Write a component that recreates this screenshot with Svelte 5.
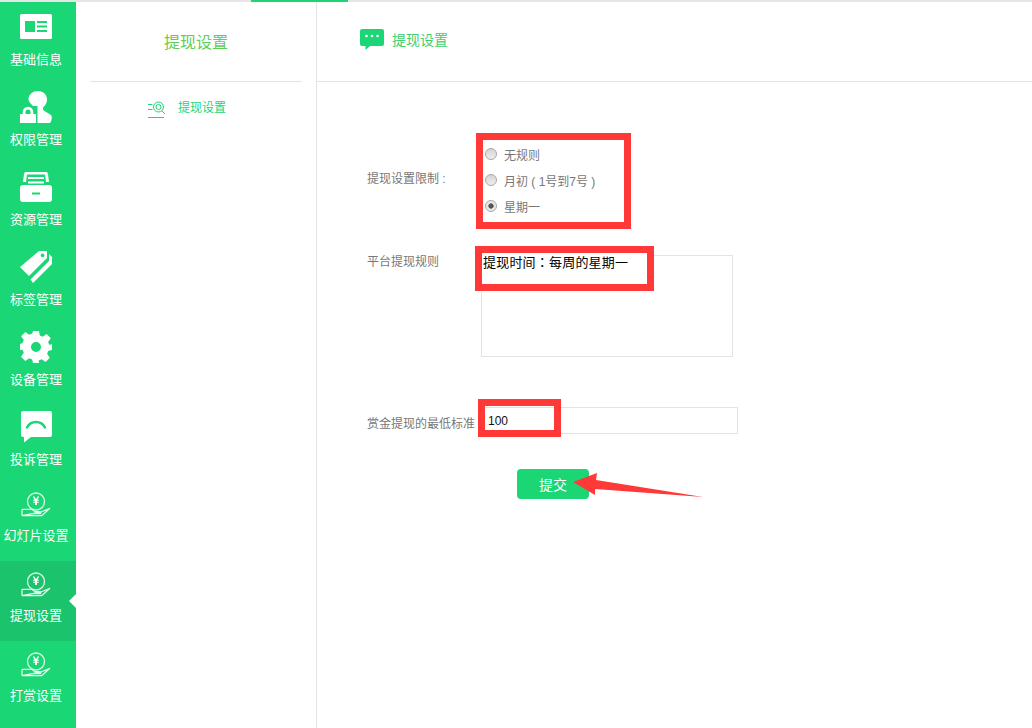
<script>
  const menu = [
    { label: '基础信息', icon: 'card' },
    { label: '权限管理', icon: 'user' },
    { label: '资源管理', icon: 'box' },
    { label: '标签管理', icon: 'tag' },
    { label: '设备管理', icon: 'gear' },
    { label: '投诉管理', icon: 'chat' },
    { label: '幻灯片设置', icon: 'coin', tight: true },
    { label: '提现设置', icon: 'coin', tight: true, active: true },
    { label: '打赏设置', icon: 'coin', tight: true },
  ]

  const options = ['无规则', '月初 ( 1号到7号 )', '星期一']
  let rule = $state('星期一')
  let ruleText = $state('')
  let minAmount = $state('100')
</script>

{#snippet icon(name)}
  <svg class="nav-icon" viewBox="0 0 32 32" aria-hidden="true">
    {#if name === 'card'}
      <path fill="#fff" d="M1.500 3h29a1.500 1.500 0 0 1 1.500 1.500v22a1.500 1.500 0 0 1-1.500 1.500h-29A1.500 1.500 0 0 1 0 26.500v-22A1.500 1.500 0 0 1 1.500 3z" />
      <path fill="#1bd674" d="M5 10h10v11H5zM17 10h10v2H17zM17 14.500h10v2H17zM17 19h10v2H17z" />
    {:else if name === 'user'}
      <path fill="#fff" d="M18 0c5.500 0 9 4 9 8.500 0 3-1.500 5.500-3.500 7.500-1 1.500-.5 3 1 4l6.500 4c1 1 1 3 .5 4.500-.3 2-1 3.500-2 3.500H17V22c0-2-1-4-2.500-5.500C11 13 8.500 11 8.500 8 8.500 3.500 13 0 18 0z" />
      <path fill="#1bd674" d="M-1 15h18.500v18H-1z" />
      <path fill="#fff" fill-rule="evenodd" d="M0 23h2.700v-2a5.300 5.300 0 0 1 10.600 0v2H16v9H0zM5.500 23h5v-2a2.500 2.500 0 0 0-5 0z" />
    {:else if name === 'box'}
      <g transform="translate(0 1)">
        <path fill="#fff" fill-rule="evenodd" d="M3 10 4 2q.2-2 2-2h20q1.800 0 2 2l1 8h-3l-1-7.500H7L6 10z" />
        <path fill="#fff" d="M8 5h16v2H8zM8 9.500h16v2H8z" />
        <path fill="#fff" fill-rule="evenodd" d="M3 13h26q3 0 3 3v11q0 3-3 3H3q-3 0-3-3V16q0-3 3-3zM12 20.500v2h8v-2z" />
      </g>
    {:else if name === 'tag'}
      <g transform="translate(0 -1)">
        <path fill="#fff" fill-rule="evenodd" d="M19 1 27 1 27 8 9 26 0 17zM22.500 3.500a1.800 1.800 0 1 0 .1 0z" />
        <path fill="#fff" d="M29 4 32 7 32 14 13 33 10.500 29.500 29 11z" />
      </g>
    {:else if name === 'gear'}
      <path fill="#fff" fill-rule="evenodd" d="M13 0h6l.8 4.500 3 1.300L26.600 3l4.200 4.200-2.700 3.900 1.300 3L32 13v6l-3.600.8-1.300 3 2.700 3.900-4.200 4.200-3.900-2.700-3 1.300L19 32h-6l-.8-3.500-3-1.300-3.900 2.700L1.100 25.700l2.700-3.900-1.300-3L0 19v-6l2.500-.9 1.300-3-2.700-3.900L5.300 1 9.200 3.700l3-1.300zM16 11a5 5 0 1 0 0 10 5 5 0 0 0 0-10z" />
    {:else if name === 'chat'}
      <g transform="translate(0 -1)">
        <path fill="#fff" d="M3 1h27q2 0 2 2v22q0 2-2 2H11l-7 5.500V27H3q-2 0-2-2V3q0-2 2-2z" />
        <path fill="none" stroke="#1bd674" stroke-width="2.500" stroke-linecap="round" d="M7 17.500c2-4 5.500-5.500 9-5.500s7 1.500 9 5.500" />
      </g>
    {:else}
      <g fill="none" stroke="#e4f5ea" stroke-width="1.300">
        <circle cx="16" cy="9.500" r="8.500" />
        <path d="M2 17.300h9.700l3.300 2.400h6l-.5 1.800H13M21 20l9-3.700-8.300 7.400H2zM2 17.300v6.400" />
      </g>
      <path fill="#fff" d="M12.800 4.500h1.600l1.600 2.800 1.600-2.800h1.600l-1.800 3.200h1.400v1h-1.900v1h1.900v1h-1.900V13h-1.800v-2.300h-1.900v-1h1.900v-1h-1.900v-1h1.400z" />
    {/if}
  </svg>
{/snippet}

<div class="page">
  <div class="top-line"><span class="top-tab"></span></div>

  <div class="shell">
    <nav class="nav">
      {#each menu as item}
        <a class="nav-item" class:tight={item.tight} class:active={item.active} href="#top">
          {@render icon(item.icon)}
          <span>{item.label}</span>
        </a>
      {/each}
    </nav>

    <aside class="side">
      <h2 class="side-title">提现设置</h2>
      <a class="side-link" href="#top">
        <svg class="side-icon" viewBox="0 0 17 17" aria-hidden="true">
          <g fill="none" stroke="#1bd674" stroke-width="1">
            <path d="M0 3.500h4.500M0 8.500h4.500M0 16.500h16" />
            <circle cx="10.500" cy="6" r="5" />
            <circle cx="10.500" cy="6" r="2.500" />
            <path d="M14 10l3 3" />
          </g>
        </svg>
        <span>提现设置</span>
      </a>
    </aside>

    <main class="main">
      <header class="main-head">
        <svg class="head-icon" viewBox="0 0 24 21" aria-hidden="true">
          <path fill="#1bd674" d="M2 0h20q2 0 2 2v13q0 2-2 2H10l-4.500 4v-4H2q-2 0-2-2V2q0-2 2-2z" />
          <g fill="#fff"><circle cx="6.500" cy="7" r="1.300" /><circle cx="12" cy="7" r="1.300" /><circle cx="17.500" cy="7" r="1.300" /></g>
        </svg>
        <span>提现设置</span>
      </header>

      <form class="form" onsubmit={(e) => e.preventDefault()}>
        <div class="row row-radio">
          <span class="label">提现设置限制 :</span>
          <div class="radios">
            {#each options as opt}
              <label class="radio">
                <input type="radio" name="rule" value={opt} bind:group={rule} />
                <span>{opt}</span>
              </label>
            {/each}
            <span class="mark mark-radios"></span>
          </div>
        </div>

        <div class="row row-text">
          <span class="label">平台提现规则</span>
          <div class="text-wrap">
            <textarea class="area" bind:value={ruleText} aria-label="平台提现规则"></textarea>
            <div class="mark mark-text">提现时间：每周的星期一</div>
          </div>
        </div>

        <div class="row row-min">
          <span class="label">赏金提现的最低标准</span>
          <div class="min-wrap">
            <input class="amount" type="text" bind:value={minAmount} aria-label="赏金提现的最低标准" />
            <span class="mark mark-min"></span>
          </div>
        </div>

        <div class="submit-row">
          <button class="submit" type="submit">提交</button>
          <svg class="arrow" viewBox="0 0 130 25" aria-hidden="true">
            <path fill="#ff3838" d="M0 9 24 0l-1 7 107 17L22 16l0 6z" />
          </svg>
        </div>
      </form>
    </main>
  </div>
</div>

<style>
  :global(body) {
    margin: 0;
    background: #fff;
    font-family: "Liberation Sans", "Noto Sans CJK SC", sans-serif;
  }
  .page {
    width: 1032px;
    height: 728px;
    overflow: hidden;
    display: flex;
    flex-direction: column;
  }
  .top-line {
    height: 2px;
    flex: none;
    background: #e6e6e6;
    position: relative;
  }
  .top-tab {
    position: absolute;
    left: 251px;
    top: 0;
    width: 97px;
    height: 2px;
    background: #1bd674;
  }
  .shell {
    flex: 1;
    display: flex;
    min-height: 0;
  }
  .nav {
    width: 76px;
    flex: none;
    background: #1bd674;
    display: flex;
    flex-direction: column;
    margin-top: -1px;
  }
  .nav-item {
    height: 80px;
    flex: none;
    box-sizing: border-box;
    padding: 10px 4px 0 0;
    display: flex;
    flex-direction: column;
    align-items: center;
    color: #fff;
    font-size: 13px;
    line-height: 18px;
    text-decoration: none;
    position: relative;
    white-space: nowrap;
  }
  .nav-item.tight {
    padding-top: 11px;
  }
  .nav-icon {
    width: 32px;
    height: 32px;
    margin-bottom: 8px;
    flex: none;
    overflow: visible;
  }
  .nav-item.tight .nav-icon {
    margin-bottom: 3px;
  }
  .nav-item.active {
    background: #1ac36c;
  }
  .nav-item.active::after {
    content: '';
    position: absolute;
    right: 0;
    top: 33px;
    border: 7px solid transparent;
    border-right-color: #fff;
    border-left-width: 0;
  }
  .side {
    width: 241px;
    flex: none;
    box-sizing: border-box;
    border-right: 1px solid #e3e3e3;
    padding: 0 14px;
  }
  .side-title {
    margin: 0;
    height: 80px;
    box-sizing: border-box;
    border-bottom: 1px solid #e3e3e3;
    text-align: center;
    font-size: 16px;
    font-weight: 400;
    line-height: 81px;
    color: #5fce55;
  }
  .side-link {
    display: flex;
    align-items: center;
    gap: 13px;
    padding: 19px 0 0 58px;
    font-size: 12px;
    line-height: 17px;
    color: #1bd674;
    text-decoration: none;
  }
  .side-link span {
    margin-top: -2px;
  }
  .side-icon {
    width: 17px;
    height: 17px;
    flex: none;
  }
  .main {
    flex: 1;
    min-width: 0;
  }
  .main-head {
    height: 80px;
    box-sizing: border-box;
    border-bottom: 1px solid #e3e3e3;
    padding: 0 0 5px 43px;
    display: flex;
    align-items: center;
    gap: 8px;
    font-size: 14px;
    color: #3fcf70;
  }
  .head-icon {
    width: 24px;
    height: 21px;
    flex: none;
  }
  .form {
    padding: 58px 0 0 50px;
    color: #777;
    font-size: 12px;
  }
  .row {
    display: flex;
  }
  .label {
    width: 114px;
    flex: none;
    line-height: 16px;
    white-space: nowrap;
  }
  .row-radio {
    align-items: center;
    height: 77px;
  }
  .radios {
    position: relative;
    display: flex;
    flex-direction: column;
    gap: 9px;
    margin-top: 5px;
  }
  .radio {
    display: flex;
    align-items: center;
    gap: 7px;
    height: 17px;
    margin-left: 4px;
    color: #777;
  }
  .radio span {
    margin-top: -2px;
  }
  .radio input {
    appearance: none;
    -webkit-appearance: none;
    width: 12px;
    height: 12px;
    margin: -3px 0 0;
    border-radius: 50%;
    border: 1px solid #a8a8a8;
    background: linear-gradient(#d4d4d4, #eee);
    box-sizing: border-box;
    flex: none;
  }
  .radio input:checked {
    background: radial-gradient(circle, #555 0 2.300px, #e8e8e8 3px);
  }
  .mark {
    position: absolute;
    box-sizing: border-box;
    border: 7px solid #ff3838;
    pointer-events: none;
  }
  .mark-radios {
    left: -5px;
    top: -14px;
    width: 155px;
    height: 96px;
  }
  .row-text {
    margin-top: 39px;
  }
  .row-text .label {
    margin-top: -2px;
  }
  .text-wrap {
    position: relative;
    flex: none;
    margin-top: -1px;
  }
  .area {
    display: block;
    width: 252px;
    height: 102px;
    box-sizing: border-box;
    border: 1px solid #e3e3e3;
    padding: 0;
    resize: none;
    outline: none;
  }
  .mark-text {
    left: -6px;
    top: -9px;
    width: 179px;
    height: 45px;
    background: #fff;
    padding: 1px 0 0 1px;
    color: #000;
    font-family: "Liberation Sans", "Noto Sans CJK TC", sans-serif;
    font-size: 13px;
    line-height: 17px;
    letter-spacing: .2px;
    white-space: nowrap;
  }
  .row-min {
    margin-top: 50px;
    align-items: center;
  }
  .row-min .label {
    margin-top: 6px;
  }
  .min-wrap {
    position: relative;
    flex: none;
  }
  .amount {
    display: block;
    width: 257px;
    height: 27px;
    box-sizing: border-box;
    border: 1px solid #e3e3e3;
    padding: 0 0 0 6px;
    font: 12px "Liberation Sans", sans-serif;
    color: #111;
    outline: none;
  }
  .mark-min {
    left: -3px;
    top: -8px;
    width: 83px;
    height: 38px;
  }
  .submit-row {
    position: relative;
    margin: 35px 0 0 150px;
    height: 30px;
  }
  .submit {
    width: 72px;
    height: 30px;
    border: 0;
    border-radius: 4px;
    background: #1bd674;
    color: #fff;
    font: 14px "Liberation Sans", "Noto Sans CJK SC", sans-serif;
    padding: 0;
  }
  .arrow {
    position: absolute;
    left: 56px;
    top: 4px;
    width: 130px;
    height: 25px;
  }
</style>
